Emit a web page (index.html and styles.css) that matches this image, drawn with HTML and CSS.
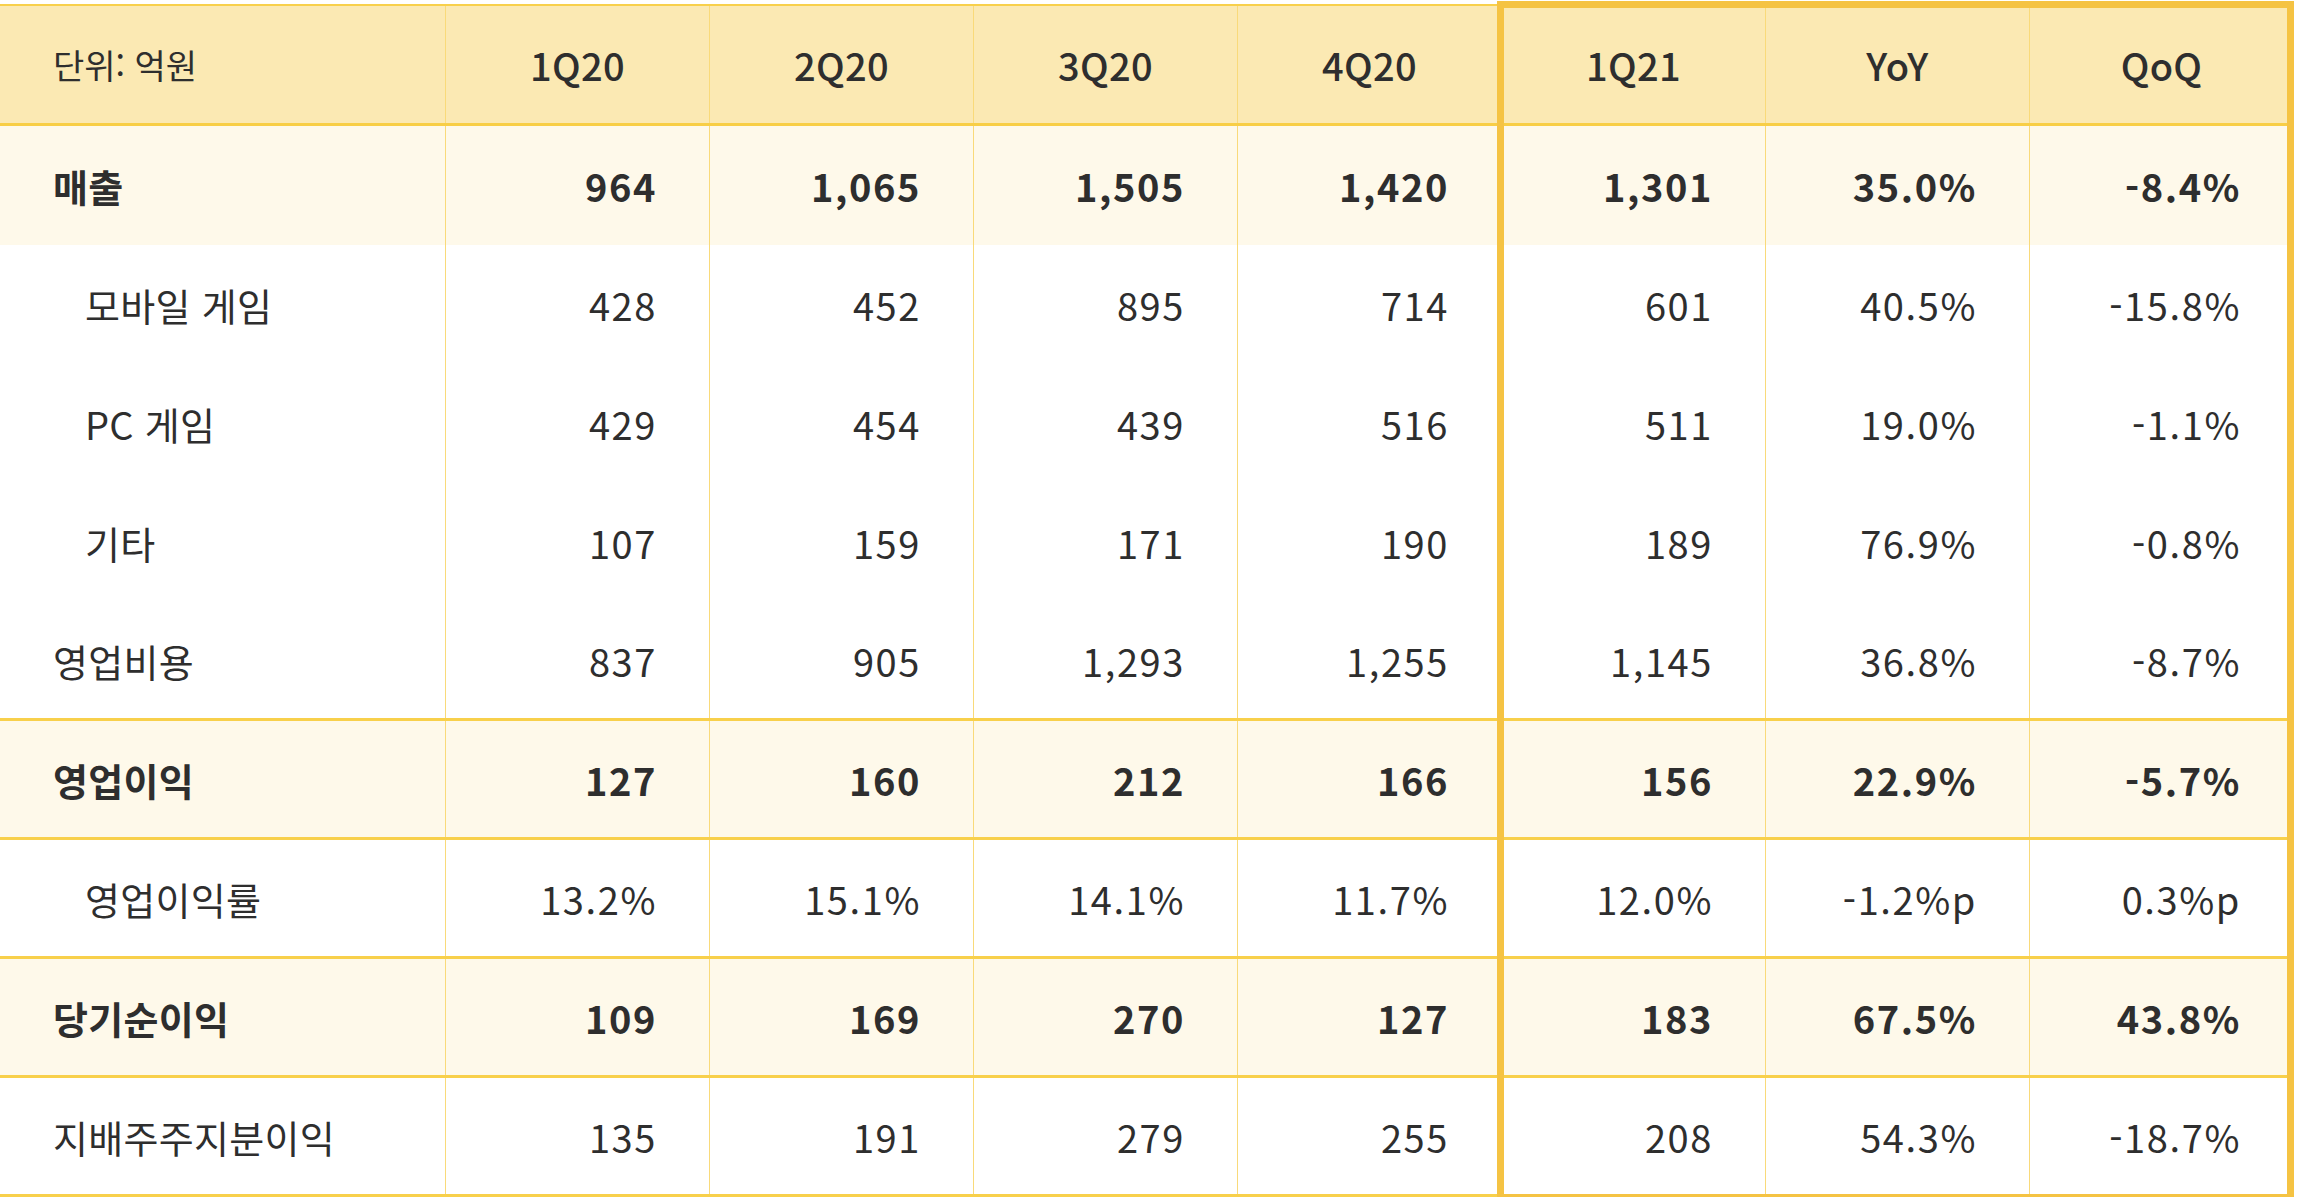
FILE: index.html
```html
<!DOCTYPE html>
<html lang="ko">
<head>
<meta charset="utf-8">
<link rel="stylesheet" href="styles.css">
</head>
<body>
<div class="wrap">
  <div class="table">
    <div class="row head">
      <div class="cell label unit">단위: 억원</div>
      <div class="cell">1Q20</div>
      <div class="cell">2Q20</div>
      <div class="cell">3Q20</div>
      <div class="cell">4Q20</div>
      <div class="cell">1Q21</div>
      <div class="cell">YoY</div>
      <div class="cell">QoQ</div>
    </div>
    <div class="row strong">
      <div class="cell label">매출</div>
      <div class="cell num">964</div><div class="cell num">1,065</div><div class="cell num">1,505</div><div class="cell num">1,420</div><div class="cell num">1,301</div><div class="cell num">35.0%</div><div class="cell num">-8.4%</div>
    </div>
    <div class="row">
      <div class="cell label sub">모바일 게임</div>
      <div class="cell num">428</div><div class="cell num">452</div><div class="cell num">895</div><div class="cell num">714</div><div class="cell num">601</div><div class="cell num">40.5%</div><div class="cell num">-15.8%</div>
    </div>
    <div class="row">
      <div class="cell label sub">PC 게임</div>
      <div class="cell num">429</div><div class="cell num">454</div><div class="cell num">439</div><div class="cell num">516</div><div class="cell num">511</div><div class="cell num">19.0%</div><div class="cell num">-1.1%</div>
    </div>
    <div class="row">
      <div class="cell label sub">기타</div>
      <div class="cell num">107</div><div class="cell num">159</div><div class="cell num">171</div><div class="cell num">190</div><div class="cell num">189</div><div class="cell num">76.9%</div><div class="cell num">-0.8%</div>
    </div>
    <div class="row lined">
      <div class="cell label">영업비용</div>
      <div class="cell num">837</div><div class="cell num">905</div><div class="cell num">1,293</div><div class="cell num">1,255</div><div class="cell num">1,145</div><div class="cell num">36.8%</div><div class="cell num">-8.7%</div>
    </div>
    <div class="row strong lined">
      <div class="cell label">영업이익</div>
      <div class="cell num">127</div><div class="cell num">160</div><div class="cell num">212</div><div class="cell num">166</div><div class="cell num">156</div><div class="cell num">22.9%</div><div class="cell num">-5.7%</div>
    </div>
    <div class="row lined">
      <div class="cell label sub">영업이익률</div>
      <div class="cell num">13.2%</div><div class="cell num">15.1%</div><div class="cell num">14.1%</div><div class="cell num">11.7%</div><div class="cell num">12.0%</div><div class="cell num">-1.2%p</div><div class="cell num">0.3%p</div>
    </div>
    <div class="row strong lined">
      <div class="cell label">당기순이익</div>
      <div class="cell num">109</div><div class="cell num">169</div><div class="cell num">270</div><div class="cell num">127</div><div class="cell num">183</div><div class="cell num">67.5%</div><div class="cell num">43.8%</div>
    </div>
    <div class="row lined">
      <div class="cell label">지배주주지분이익</div>
      <div class="cell num">135</div><div class="cell num">191</div><div class="cell num">279</div><div class="cell num">255</div><div class="cell num">208</div><div class="cell num">54.3%</div><div class="cell num">-18.7%</div>
    </div>
  </div>
  <div class="highlight"></div>
</div>
</body>
</html>
```

FILE: styles.css
```css
html, body {
  margin: 0;
  padding: 0;
  background: #ffffff;
}
body {
  font-family: "Noto Sans CJK KR", "Noto Sans", sans-serif;
  color: #2e2e2e;
}
.wrap {
  position: relative;
  width: 2293px;
  padding-top: 4px;
}
.table {
  display: flex;
  flex-direction: column;
  border-top: 2px solid #f8d04b;
}
.row {
  display: grid;
  grid-template-columns: 445px repeat(7, 264px);
  height: 119px;
  box-sizing: border-box;
  background: #ffffff;
}
.row.head {
  height: 120px;
  background: #fbe9b3;
  border-bottom: 3px solid #f8ce45;
}
.row.strong {
  background: #fef9ea;
}
.row.lined {
  border-bottom: 3px solid #f8d04b;
}
.cell {
  display: flex;
  align-items: center;
  justify-content: center;
  font-size: 38px;
  font-weight: 400;
  border-left: 1px solid #f9da7a;
  letter-spacing: 0.3px;
}
.cell.label {
  border-left: none;
  justify-content: flex-start;
  padding-left: 53px;
}
.cell.label.sub {
  padding-left: 85px;
}
.cell.num {
  justify-content: flex-end;
  padding-right: 52px;
  letter-spacing: 1.6px;
}
.head .cell {
  font-weight: 500;
}
.head .cell.unit {
  font-weight: 400;
  font-size: 34px;
  letter-spacing: 0;
}
.strong .cell {
  font-weight: 700;
}
.highlight {
  position: absolute;
  left: 1497px;
  top: 1px;
  width: 797px;
  height: 1200px;
  box-sizing: border-box;
  border: 7px solid #f5c343;
  pointer-events: none;
}
```
